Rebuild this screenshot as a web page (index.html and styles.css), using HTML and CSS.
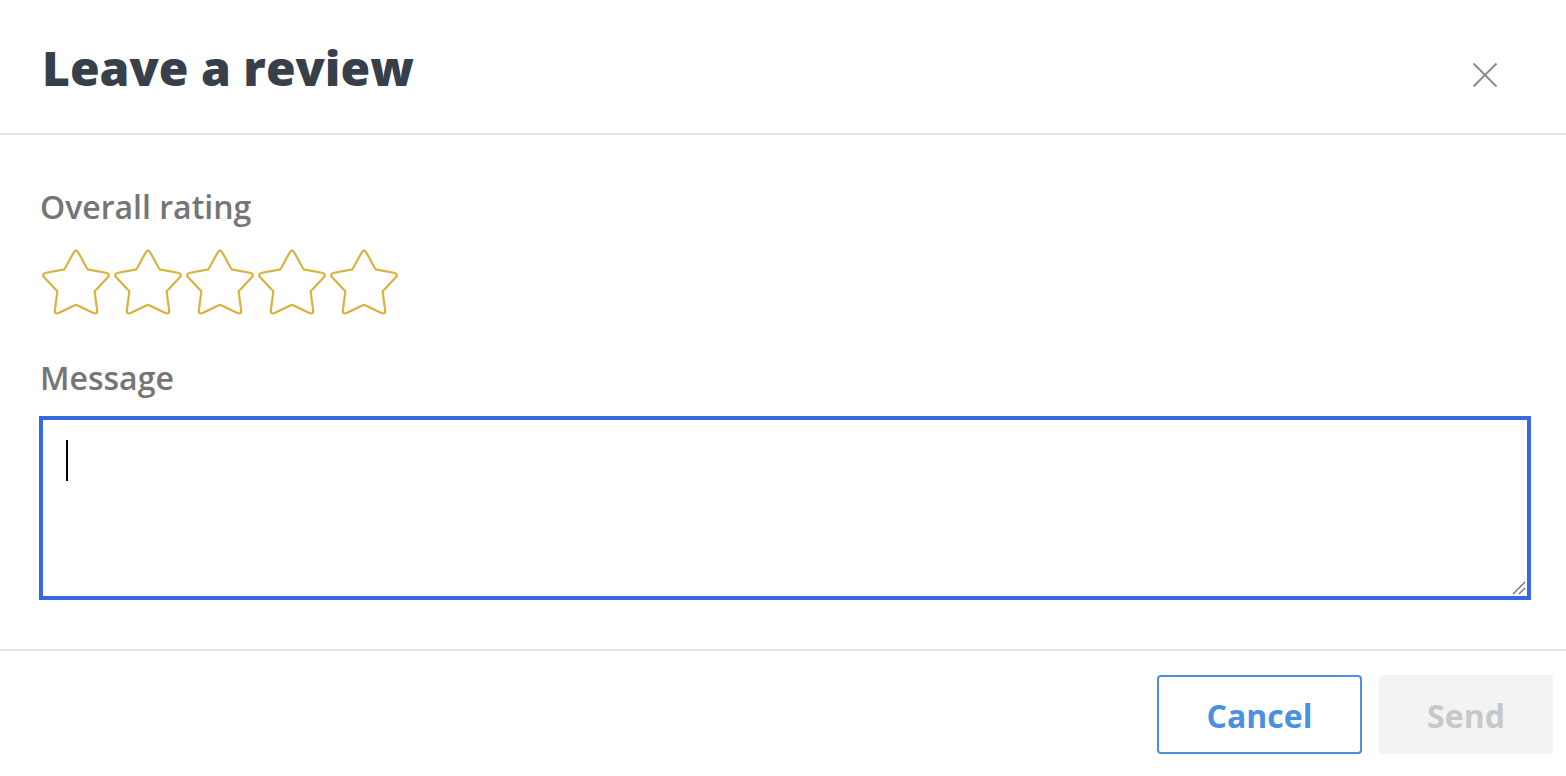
FILE: index.html
```html
<!DOCTYPE html>
<html lang="en">
<head>
<meta charset="utf-8">
<title>Leave a review</title>
<link rel="stylesheet" href="styles.css">
</head>
<body>
<div class="modal">
  <header class="modal-header">
    <h1 class="modal-title">Leave a review</h1>
    <button class="close-btn" aria-label="Close">
      <svg width="26" height="26" viewBox="0 0 26 26"><path d="M1.5 1.5 L24.5 24.5 M24.5 1.5 L1.5 24.5" stroke="#8c8c8c" stroke-width="2" fill="none"/></svg>
    </button>
  </header>
  <main class="modal-body">
    <div class="field-label">Overall rating</div>
    <div class="stars">
      <svg class="star" viewBox="0.9 0 66.2 64.3" width="72" height="70"><path d="M31.61 6.39 Q34 2 36.39 6.39 L44.58 21.44 L61.42 24.58 Q66.34 25.49 62.90 29.12 L51.12 41.56 L53.34 58.55 Q53.98 63.51 49.47 61.36 L34 54 L18.53 61.36 Q14.02 63.51 14.66 58.55 L16.88 41.56 L5.10 29.12 Q1.66 25.49 6.58 24.58 L23.42 21.44 Z"/></svg>
      <svg class="star" viewBox="0.9 0 66.2 64.3" width="72" height="70"><path d="M31.61 6.39 Q34 2 36.39 6.39 L44.58 21.44 L61.42 24.58 Q66.34 25.49 62.90 29.12 L51.12 41.56 L53.34 58.55 Q53.98 63.51 49.47 61.36 L34 54 L18.53 61.36 Q14.02 63.51 14.66 58.55 L16.88 41.56 L5.10 29.12 Q1.66 25.49 6.58 24.58 L23.42 21.44 Z"/></svg>
      <svg class="star" viewBox="0.9 0 66.2 64.3" width="72" height="70"><path d="M31.61 6.39 Q34 2 36.39 6.39 L44.58 21.44 L61.42 24.58 Q66.34 25.49 62.90 29.12 L51.12 41.56 L53.34 58.55 Q53.98 63.51 49.47 61.36 L34 54 L18.53 61.36 Q14.02 63.51 14.66 58.55 L16.88 41.56 L5.10 29.12 Q1.66 25.49 6.58 24.58 L23.42 21.44 Z"/></svg>
      <svg class="star" viewBox="0.9 0 66.2 64.3" width="72" height="70"><path d="M31.61 6.39 Q34 2 36.39 6.39 L44.58 21.44 L61.42 24.58 Q66.34 25.49 62.90 29.12 L51.12 41.56 L53.34 58.55 Q53.98 63.51 49.47 61.36 L34 54 L18.53 61.36 Q14.02 63.51 14.66 58.55 L16.88 41.56 L5.10 29.12 Q1.66 25.49 6.58 24.58 L23.42 21.44 Z"/></svg>
      <svg class="star" viewBox="0.9 0 66.2 64.3" width="72" height="70"><path d="M31.61 6.39 Q34 2 36.39 6.39 L44.58 21.44 L61.42 24.58 Q66.34 25.49 62.90 29.12 L51.12 41.56 L53.34 58.55 Q53.98 63.51 49.47 61.36 L34 54 L18.53 61.36 Q14.02 63.51 14.66 58.55 L16.88 41.56 L5.10 29.12 Q1.66 25.49 6.58 24.58 L23.42 21.44 Z"/></svg>
    </div>
    <label class="field-label message-label" for="msg">Message</label>
    <div class="textarea-wrap">
      <textarea id="msg" class="message-input"></textarea>
      <span class="caret"></span>
      <svg class="grip" width="14" height="14" viewBox="0 0 14 14"><path d="M1 13 L13 1 M7 13 L13 7" stroke="#6b6b6b" stroke-width="1.2" fill="none"/></svg>
    </div>
  </main>
  <footer class="modal-footer">
    <button class="btn btn-cancel">Cancel</button>
    <button class="btn btn-send" disabled>Send</button>
  </footer>
</div>
</body>
</html>
```

FILE: styles.css
```css
* { box-sizing: border-box; }

html, body {
  margin: 0;
  padding: 0;
  background: #ffffff;
  font-family: "Open Sans", "Noto Sans", sans-serif;
}

.modal {
  width: 1566px;
  height: 776px;
  display: flex;
  flex-direction: column;
  overflow: hidden;
}

.modal-header {
  display: flex;
  align-items: flex-start;
  justify-content: space-between;
  padding: 44px 68px 41px 42px;
  border-bottom: 2px solid #e6e6e6;
}

.modal-title {
  margin: 0;
  font-size: 48px;
  line-height: 48px;
  font-weight: 800;
  color: #37404a;
}

.close-btn {
  margin-top: 18px;
  padding: 0;
  border: 0;
  background: none;
  width: 26px;
  height: 26px;
  cursor: pointer;
}

.close-btn svg { display: block; }

.modal-body {
  display: flex;
  flex-direction: column;
  align-items: flex-start;
  padding: 56px 35px 0 39px;
}

.field-label {
  display: block;
  margin-left: 1px;
  font-size: 32px;
  line-height: 32px;
  font-weight: 600;
  color: #757575;
}

.stars {
  display: flex;
  margin-top: 23px;
  margin-left: 1px;
}

.star {
  display: block;
  fill: none;
  stroke: #d9b23c;
  stroke-width: 2;
  stroke-linejoin: round;
}

.message-label {
  margin-top: 46px;
}

.textarea-wrap {
  position: relative;
  width: 100%;
  margin-top: 22px;
}

.message-input {
  display: block;
  width: 100%;
  height: 184px;
  margin: 0;
  padding: 20px 24px;
  border: 4px solid #3668e0;
  border-radius: 0;
  outline: none;
  font-family: "Open Sans", sans-serif;
  font-size: 30px;
  resize: none;
  background: #fff;
}

.caret {
  position: absolute;
  left: 27px;
  top: 24px;
  width: 2px;
  height: 41px;
  background: #000;
}

.grip {
  position: absolute;
  right: 5px;
  bottom: 5px;
}

.modal-footer {
  margin-top: auto;
  display: flex;
  justify-content: flex-end;
  gap: 17px;
  padding: 24px 13px 22px 0;
  border-top: 2px solid #e6e6e6;
}

.btn {
  height: 79px;
  padding: 2px 0 0;
  border-radius: 4px;
  font-family: "Open Sans", sans-serif;
  font-size: 32px;
  font-weight: 700;
  cursor: pointer;
}

.btn-cancel {
  width: 205px;
  background: #fff;
  border: 2px solid #4a90e2;
  color: #4a90e2;
}

.btn-send {
  width: 174px;
  background: #f3f3f3;
  border: 0;
  color: #c6c8cb;
  cursor: default;
}
```
